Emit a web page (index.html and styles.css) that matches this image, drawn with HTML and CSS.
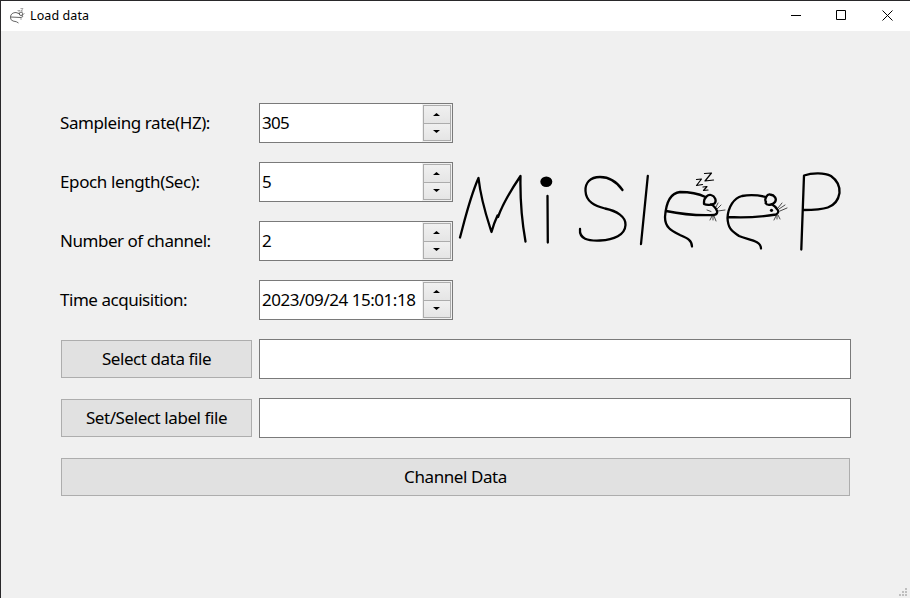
FILE: index.html
```html
<!DOCTYPE html>
<html lang="en">
<head>
<meta charset="utf-8">
<title>Load data</title>
<link rel="stylesheet" href="styles.css">
</head>
<body>
<div class="window">
  <header class="titlebar">
    <svg class="app-icon" viewBox="0 0 16 16"><path d="M1.500 9C1.500 6 4 4.500 7 4.500L11 6M1.500 9L12 9.500Q15 9 13 7M1.500 9Q1 12 4 13Q8 13.500 9.500 15"/><circle cx="12" cy="5.800" r="1.700"/><path class="faint" d="M8.500 2.500h2.500L9 4.500M11.500 .5h2.500l-2 2.500h2M14 7l1.500-2M12 10v2"/></svg>
    <span class="title">Load data</span>
    <div class="controls">
      <svg viewBox="0 0 45 30"><path d="M10 14.500h10"/></svg>
      <svg viewBox="0 0 46 30"><path d="M10.500 9.500h9v9h-9z"/></svg>
      <svg viewBox="0 0 46 30"><path class="close" d="M10.500 9.500l10 10M20.500 9.500l-10 10"/></svg>
    </div>
  </header>
  <main class="form">
    <label class="l1">Sampleing rate(HZ):</label>
    <div class="spin"><span class="value num">305</span><div class="steps"><i class="up"></i><i class="down"></i></div></div>
    <svg class="logo" viewBox="453 103 398 217">
      <path d="M460 237.500C465 219 470 197 478.500 178C481 201 487 218 491.500 232Q494 223 497.500 215.500L498 217C502 206 511 190 520.500 176C520 199 522 222 525.500 241.500M547.500 196L547.800 242.500"/>
      <ellipse class="solid" cx="546.300" cy="181.700" rx="6" ry="5.200"/>
      <path d="M622.500 190C617 182 609 177 600 177C590 177 585 183 585.500 191C586 202 595 206 605 208.500C617 211 626 217 625.500 225C625 235 614 240 600 240.500C588 241 579 239 580 229M647.800 176L641 244"/>
      <path d="M705.500 197C697 193 689 192 680 192C670 193 666 203 665 217C665 228 672 231 680 235C687 238 692 240 692 246.500M666 211Q690 216 714 215Q718 214 717 211Q715 206 711 204.500"/>
      <path d="M704 202C704 198 708 194 711 195C715 196 717 201 714.500 203.500C712 205 707 205.500 704 204Z"/>
      <path class="thin" d="M696.500 179.500L701.500 179L696.500 185.500L702.500 184.500M704.500 173.500L711.500 173L705 181L713.500 180M703 187L707 186.500L703.500 190.500L708 190"/>
      <path class="hair" d="M707 210l4 1.500M716 207l2-4M717 209l4-4M718 211l7-1M712 216l-2 4M713 216v4M714 216l2 5"/>
      <path d="M766 197C758 195 750 194.500 742 196C734 198 728 207 727.500 218C728 229 732 231 739 236C748 240 761 240 761 248.500M728 217C742 218 760 217 776 214.500Q780 212 777 209Q775 206 772 204.500"/>
      <path d="M766 202C764 199 767 194 770 194.500C775 195 777 199 775 202C773 205 767 206 765.500 203Z"/>
      <circle class="solid" cx="771.500" cy="210.300" r="1.600"/>
      <path class="hair" d="M778 208l4-5M779 209l6-4M780 211l7-3M776 216l-2 4M777 215v4M778 215l2 4"/>
      <path d="M801.300 249.500L804 175.500C811 173 824 172 831 176C838 181 840 187 839.500 193C837 209 823 210 803 210"/>
    </svg>
    <label class="l2">Epoch length(Sec):</label>
    <div class="spin"><span class="value num">5</span><div class="steps"><i class="up"></i><i class="down"></i></div></div>
    <label class="l3">Number of channel:</label>
    <div class="spin"><span class="value num">2</span><div class="steps"><i class="up"></i><i class="down"></i></div></div>
    <label class="l4">Time acquisition:</label>
    <div class="spin"><span class="value date">2023/09/24 15:01:18</span><div class="steps"><i class="up"></i><i class="down"></i></div></div>
    <button class="btn b1">Select data file</button>
    <div class="line"></div>
    <button class="btn b2">Set/Select label file</button>
    <div class="line"></div>
    <button class="btn wide">Channel Data</button>
  </main>
  <svg class="grip" viewBox="0 0 8 8"><path d="M6 0h2v2H6zM3 3h2v2H3zM6 3h2v2H6zM0 6h2v2H0zM3 6h2v2H3zM6 6h2v2H6z"/></svg>
</div>
</body>
</html>
```

FILE: styles.css
```css
* { box-sizing: border-box; }
body { margin: 0; }
.window {
  position: relative;
  width: 910px;
  height: 598px;
  overflow: hidden;
  background: #f0f0f0;
  border-left: 1px solid #29282a;
  border-top: 1px solid #29282a;
  font: 17px/38px "Noto Sans", "Open Sans", sans-serif;
  color: #000;
}
.titlebar {
  display: flex;
  align-items: center;
  height: 30px;
  padding-left: 8px;
  background: #fff;
}
.app-icon { width: 16px; height: 16px; fill: none; stroke: #555; stroke-width: .9; }
.faint { stroke: #888; stroke-width: .7; }
.title { margin-left: 5px; font-size: 12.500px; line-height: 30px; letter-spacing: .1px; }
.controls { display: flex; margin: 0 -8px 0 auto; }
.controls svg { width: 46px; height: 30px; fill: none; stroke: #000; }
.controls svg:first-child { width: 45px; }
.form {
  display: grid;
  grid-template-columns: 199px 194px 398px;
  grid-auto-rows: 40px;
  row-gap: 19px;
  padding: 72px 0 0 59px;
}
label, .value, .btn { white-space: nowrap; }
label { line-height: 40px; }
.l1 { letter-spacing: -.42px; }
.l2 { letter-spacing: -.39px; }
.l3, .l4, .date { letter-spacing: -.47px; }
.num { letter-spacing: -.7px; }
.spin {
  display: flex;
  justify-content: space-between;
  background: #fff;
  border: 1px solid #7a7a7a;
}
.value { width: 162px; padding-left: 2px; }
.steps {
  display: flex;
  flex-direction: column;
  width: 30px;
  padding: 1px;
  background: #f0f0f0;
}
.steps i {
  display: flex;
  flex: none;
  align-items: center;
  justify-content: center;
  width: 28px;
  height: 19px;
  padding-right: 1px;
  border: 1px solid #acacac;
  background: linear-gradient(#f0f0f0, #e5e5e5);
}
.steps .down { height: 18px; margin-top: -1px; padding-bottom: 1px; }
.steps i::before { content: ""; width: 7px; height: 3px; background: #000; }
.steps .up::before { clip-path: polygon(50% 0, 100% 100%, 0 100%); }
.steps .down::before { clip-path: polygon(0 0, 100% 0, 50% 100%); }
.logo {
  grid-column: 3;
  grid-row: 1 / 5;
  width: 398px;
  height: 217px;
  fill: none;
  stroke: #000;
  stroke-width: 2.300;
  stroke-linecap: round;
  stroke-linejoin: round;
}
.logo .solid { fill: #000; stroke: none; }
.logo .thin { stroke-width: 1.200; }
.logo .hair { stroke-width: .7; }
.btn {
  width: 191px;
  height: 38px;
  margin: 1px 0 0 1px;
  padding: 0;
  border: 1px solid #adadad;
  background: #e1e1e1;
  font: inherit;
  line-height: 36px;
  letter-spacing: -.42px;
  color: #000;
  text-align: center;
}
.line { grid-column: 2 / 4; width: 592px; background: #fff; border: 1px solid #7a7a7a; }
.wide { grid-column: 1 / 4; width: 789px; }
.grip { position: absolute; right: 3px; bottom: 2px; width: 8px; height: 8px; fill: #bfbfbf; }
```
